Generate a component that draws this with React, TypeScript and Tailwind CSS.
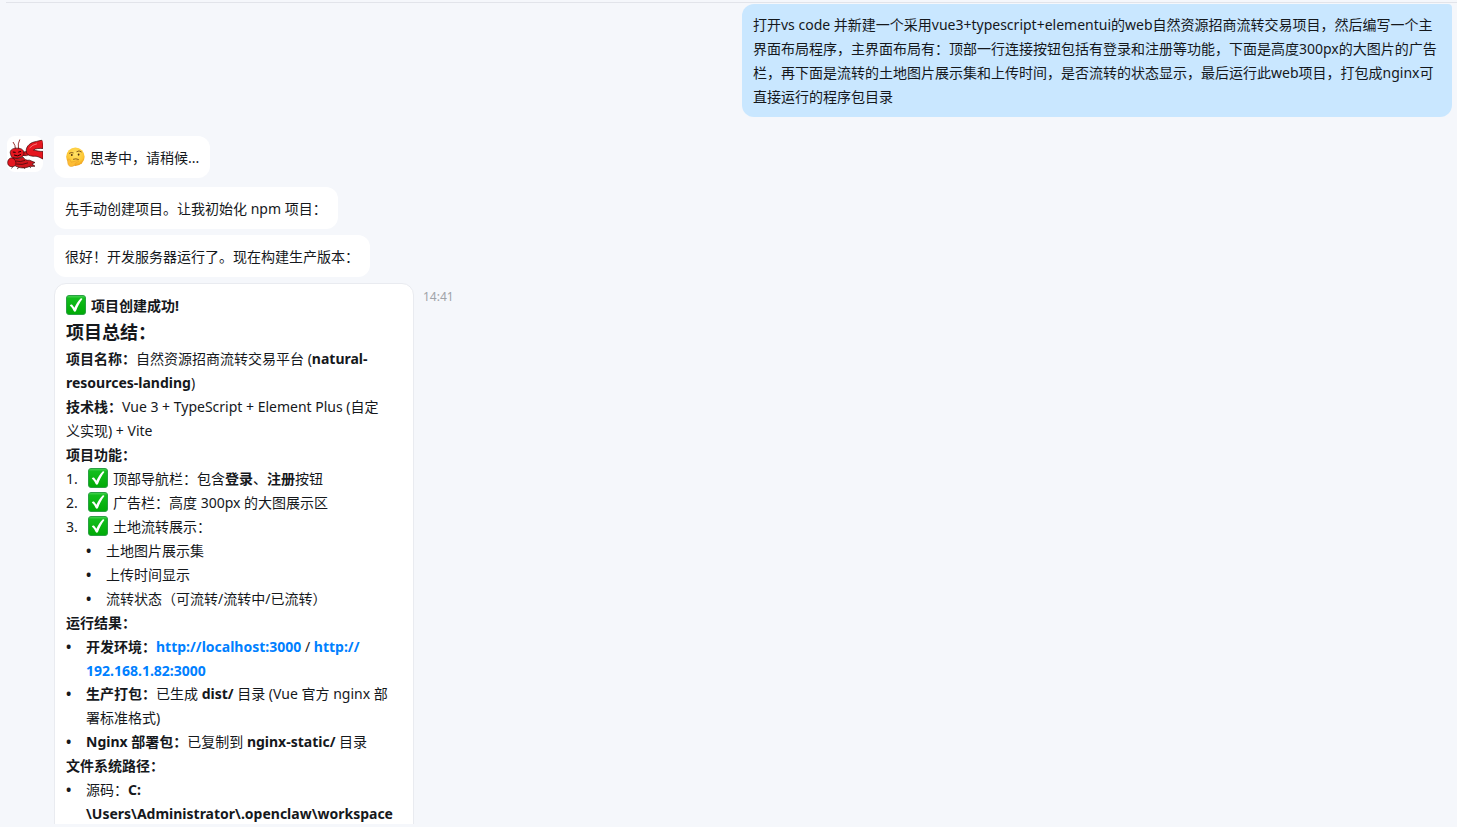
import type { ReactNode } from 'react';

function CheckEmoji() {
  return (
    <svg viewBox="0 0 20 20" className="inline-block w-5 h-5 mr-[5px] -mt-1 align-middle" role="img" aria-label="完成">
      <defs>
        <linearGradient id="check-bg" x1="0" y1="0" x2="0" y2="1">
          <stop offset="0" stopColor="#4fd65a" />
          <stop offset="0.15" stopColor="#12bd1c" />
          <stop offset="1" stopColor="#00aa06" />
        </linearGradient>
      </defs>
      <rect x="0.5" y="0.5" width="19" height="19" rx="2.5" fill="url(#check-bg)" stroke="#2ba044" />
      <path d="M3.8 10.4 C4.6 9.4 5.6 9.2 6.4 10 C7.2 10.9 7.9 11.9 8.4 12.8 C10 9.2 12.1 6 14.6 3.5 C15.2 3 16.2 3.2 16.4 4 C13.7 7.5 11.6 11.5 10 16 C9.4 17 8.2 17 7.7 16 C6.8 13.9 5.6 12 3.8 10.4 Z" fill="#fff" />
    </svg>
  );
}

function ThinkingEmoji() {
  return (
    <svg viewBox="0 0 20 20" className="inline-block w-5 h-5 mr-[5px] -mt-1 align-middle" role="img" aria-label="思考">
      <defs>
        <radialGradient id="face-bg" cx="0.5" cy="0.35" r="0.65">
          <stop offset="0" stopColor="#ffe469" />
          <stop offset="0.7" stopColor="#fdc632" />
          <stop offset="1" stopColor="#ec9a1c" />
        </radialGradient>
      </defs>
      <circle cx="10.4" cy="9.8" r="9.2" fill="url(#face-bg)" />
      <path d="M4.4 6.2 Q6 5 8.2 5.8" stroke="#7a5019" strokeWidth="0.9" fill="none" strokeLinecap="round" />
      <path d="M11.8 4.6 Q14 2.8 16.3 4.8" stroke="#7a5019" strokeWidth="0.9" fill="none" strokeLinecap="round" />
      <ellipse cx="6.8" cy="8" rx="0.9" ry="1.1" fill="#4d2f0c" />
      <ellipse cx="13.6" cy="7.6" rx="0.9" ry="1.1" fill="#4d2f0c" />
      <path d="M8.4 12.2 Q10.8 11.2 13.4 12.4" stroke="#7a5019" strokeWidth="0.9" fill="none" strokeLinecap="round" />
      <path d="M3.2 12.4 C2.2 14.5 2.6 18.8 5.4 19.4 C8.4 20 10 18.2 10.2 16.4 L13.6 14.6 C14 13.8 13.2 13.3 12.6 13.5 L6.2 15.2 L4.8 12.4 C4.4 11.6 3.5 11.7 3.2 12.4 Z" fill="#fdbd35" stroke="#e29a28" strokeWidth="0.5" />
    </svg>
  );
}

function Avatar() {
  return (
    <svg viewBox="0 0 36 36" className="w-9 h-9 shrink-0 rounded-lg bg-white" role="img" aria-label="龙虾">
      <g stroke="#3a0808" strokeWidth="0.7" strokeLinejoin="round">
        <path d="M8.5 13.5 Q8.5 9 6 6 M11.5 13 Q10.5 7.5 12.8 3.5" fill="none" stroke="#8c1c1c" strokeWidth="0.9" />
        <path d="M15 16 Q18.5 16.5 20.5 14.5 L23 18 Q19.5 20.5 16 19.5 Z" fill="#d1151c" />
        <path d="M19.5 16.5 C18 11.5 22.5 7 27 6 C30.5 5.2 33.5 4.4 36 4 L36 12.5 C32.5 12.2 28.5 12.4 26.5 14 C29.5 14.8 33 15.6 36 15.4 L36 23 C34 22.3 32 20.7 29 20.2 C25 20.6 20.5 19.7 19.5 16.5 Z" fill="#e5161f" />
        <path d="M3.2 16.8 C3.2 13.2 7 11.8 10.5 12.2 C15 12.2 17.5 14.5 16.8 18.5 C16 22.4 6.5 23.5 4.2 20.4 Z" fill="#e5161f" />
        <path d="M5.8 21.8 C8.5 23 13.5 22.8 16 21 C17.5 23.6 19.5 24.6 22.5 24.2 L28 26.5 L25 28 L28 30.2 L22.5 30.4 C17 33 10 32 7.2 28.8 Z" fill="#cf151c" />
        <path d="M4.8 21.8 C1.5 22 0 25.6 1 28.4 C2.4 31.4 7.6 31.4 8.8 28.6 C9.4 25.8 7.8 22.4 4.8 21.8 Z" fill="#e5161f" />
        <path d="M9 25 Q13 26.5 18 24.4 M9.5 28 Q15 29.5 21 26.8 M6 30.5 L4.5 32.5 M12 31.4 L10 33 M17 31.6 L18 33 M22 30.2 L24 32" fill="none" />
      </g>
      <path d="M5.8 16 L8.6 16.4 M11.2 16.2 L14 15.4 M7 19 Q10.5 21 14 18.4" stroke="#200" strokeWidth="1" fill="none" />
      <path d="M22.5 12 Q25.5 8.6 30 7.8" stroke="#ff8080" strokeWidth="0.9" fill="none" />
    </svg>
  );
}

function Bubble({ children }: { children: ReactNode }) {
  return (
    <div className="w-fit rounded-xl rounded-tl-sm bg-white px-[11px] pt-[10px] pb-2 leading-6">{children}</div>
  );
}

function BulletItem({ children }: { children: ReactNode }) {
  return (
    <li className="flex">
      <span className="w-5 shrink-0 font-bold">•</span>
      <div>{children}</div>
    </li>
  );
}

const features: ReactNode[] = [
  <>顶部导航栏：包含<b>登录</b>、<b>注册</b>按钮</>,
  <>广告栏：高度 300px 的大图展示区</>,
  <>土地流转展示：</>,
];

const landItems = ['土地图片展示集', '上传时间显示', '流转状态（可流转/流转中/已流转）'];

export default function App() {
  return (
    <div className="h-screen overflow-hidden bg-[#f5f7fb] pb-[3px] font-['Noto_Sans','Noto_Sans_CJK_SC',sans-serif] text-sm text-[#15181c]">
      <main className="h-full overflow-hidden pl-[6px] pt-[2px]">
        <div className="border-t border-[#e2e4ea] pr-[5px] pt-px">
          <div className="ml-auto w-[710px] whitespace-nowrap rounded-xl rounded-tr-sm bg-[#c9e7ff] px-[11px] pb-2 pt-[9px] leading-6">
            打开vs code 并新建一个采用vue3+typescript+elementui的web自然资源招商流转交易项目，然后编写一个主<br />
            界面布局程序，主界面布局有：顶部一行连接按钮包括有登录和注册等功能，下面是高度300px的大图片的广告<br />
            栏，再下面是流转的土地图片展示集和上传时间，是否流转的状态显示，最后运行此web项目，打包成nginx可<br />
            直接运行的程序包目录
          </div>
        </div>

        <div className="mt-[19px] flex gap-[11px] pl-px">
          <Avatar />
          <div>
            <Bubble><ThinkingEmoji />思考中，请稍候...</Bubble>
            <div className="mt-[9px] space-y-[6px]">
              <Bubble>先手动创建项目。让我初始化 npm 项目：</Bubble>
              <Bubble>很好！开发服务器运行了。现在构建生产版本：</Bubble>
              <div className="flex items-start gap-[9px]">
                <article className="w-[360px] whitespace-nowrap rounded-xl border border-[#e9ebf0] bg-white px-[11px] py-[10px] leading-6">
                  <p className="h-6 font-bold"><CheckEmoji />项目创建成功!</p>
                  <h2 className="text-lg font-bold leading-[29px]">项目总结：</h2>
                  <p>
                    <b>项目名称：</b>自然资源招商流转交易平台 (<b>natural-<br />resources-landing</b>)
                  </p>
                  <p>
                    <b>技术栈：</b>Vue 3 + TypeScript + Element Plus (自定<br />义实现) + Vite
                  </p>
                  <p className="font-bold">项目功能：</p>
                  <ol>
                    {features.map((item, i) => (
                      <li key={i} className="flex h-6">
                        <span className="w-[22px] shrink-0">{i + 1}.</span>
                        <div><CheckEmoji />{item}</div>
                      </li>
                    ))}
                  </ol>
                  <ul className="pl-5">
                    {landItems.map((item) => (
                      <BulletItem key={item}>{item}</BulletItem>
                    ))}
                  </ul>
                  <p className="font-bold">运行结果：</p>
                  <ul>
                    <BulletItem>
                      <b>开发环境：</b>
                      <a href="http://localhost:3000" className="font-bold text-[#0080ff]">http://localhost:3000</a>
                      {' / '}
                      <a href="http://192.168.1.82:3000" className="font-bold text-[#0080ff]">
                        http://<span className="block leading-[23px]">192.168.1.82:3000</span>
                      </a>
                    </BulletItem>
                    <BulletItem>
                      <b>生产打包：</b>已生成 <b>dist/</b> 目录 (Vue 官方 nginx 部<br />署标准格式)
                    </BulletItem>
                    <BulletItem>
                      <b>Nginx 部署包：</b>已复制到 <b>nginx-static/</b> 目录
                    </BulletItem>
                  </ul>
                  <p className="font-bold">文件系统路径：</p>
                  <ul>
                    <BulletItem>
                      源码：<b>C:<span className="block leading-[23px]">\Users\Administrator\.openclaw\workspace</span></b>
                    </BulletItem>
                  </ul>
                </article>
                <time className="pt-[5px] text-xs leading-[18px] text-[#a0a3a8]">14:41</time>
              </div>
            </div>
          </div>
        </div>
      </main>
    </div>
  );
}
